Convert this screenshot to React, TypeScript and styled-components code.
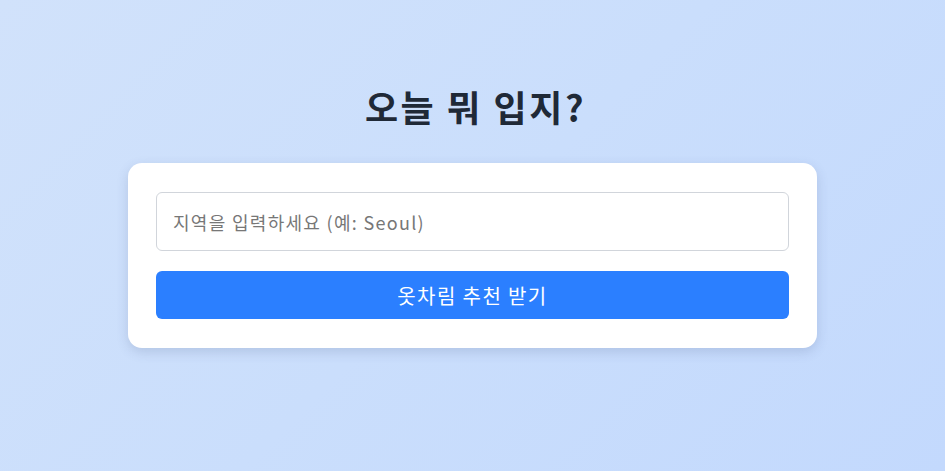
import React, { useState } from "react";
import styled, { createGlobalStyle } from "styled-components";

const GlobalStyle = createGlobalStyle`
  html, body {
    margin: 0;
    padding: 0;
  }
  body {
    font-family: "Noto Sans CJK KR", "Noto Sans", "Liberation Sans", sans-serif;
    background: linear-gradient(135deg, #d1e2fb 0%, #cadefc 50%, #c3d9fd 100%);
    min-height: 100vh;
  }
  * { box-sizing: border-box; }
`;

const Page = styled.main`
  min-height: 100vh;
  display: flex;
  flex-direction: column;
  align-items: center;
  padding-top: 79px;
`;

const Title = styled.h1`
  margin: 0 0 30px;
  padding-left: 6px;
  font-size: 36px;
  line-height: 54px;
  font-weight: 700;
  color: #1f2937;
  letter-spacing: 2.6px;
`;

const Card = styled.section`
  width: 689px;
  background: #ffffff;
  border-radius: 14px;
  padding: 29px 28px;
  box-shadow: 0 4px 12px rgba(60, 80, 120, 0.18);
  display: flex;
  flex-direction: column;
  gap: 20px;
`;

const Input = styled.input`
  width: 100%;
  height: 59px;
  border: 1px solid #d1d5db;
  border-radius: 6px;
  padding: 0 16px;
  font-family: inherit;
  font-size: 18px;
  letter-spacing: 1.3px;
  color: #1f2937;
  outline: none;
  &::placeholder {
    color: #777777;
  }
`;

const Button = styled.button`
  width: 100%;
  height: 48px;
  border: none;
  border-radius: 6px;
  background: #2b7fff;
  color: #ffffff;
  font-family: inherit;
  font-size: 20px;
  letter-spacing: 1.4px;
  cursor: pointer;
`;

export default function App() {
  const [city, setCity] = useState("");
  return (
    <>
      <GlobalStyle />
      <Page>
        <Title>오늘 뭐 입지?</Title>
        <Card>
          <Input
            value={city}
            onChange={(e) => setCity(e.target.value)}
            placeholder="지역을 입력하세요 (예: Seoul)"
          />
          <Button type="button">옷차림 추천 받기</Button>
        </Card>
      </Page>
    </>
  );
}
